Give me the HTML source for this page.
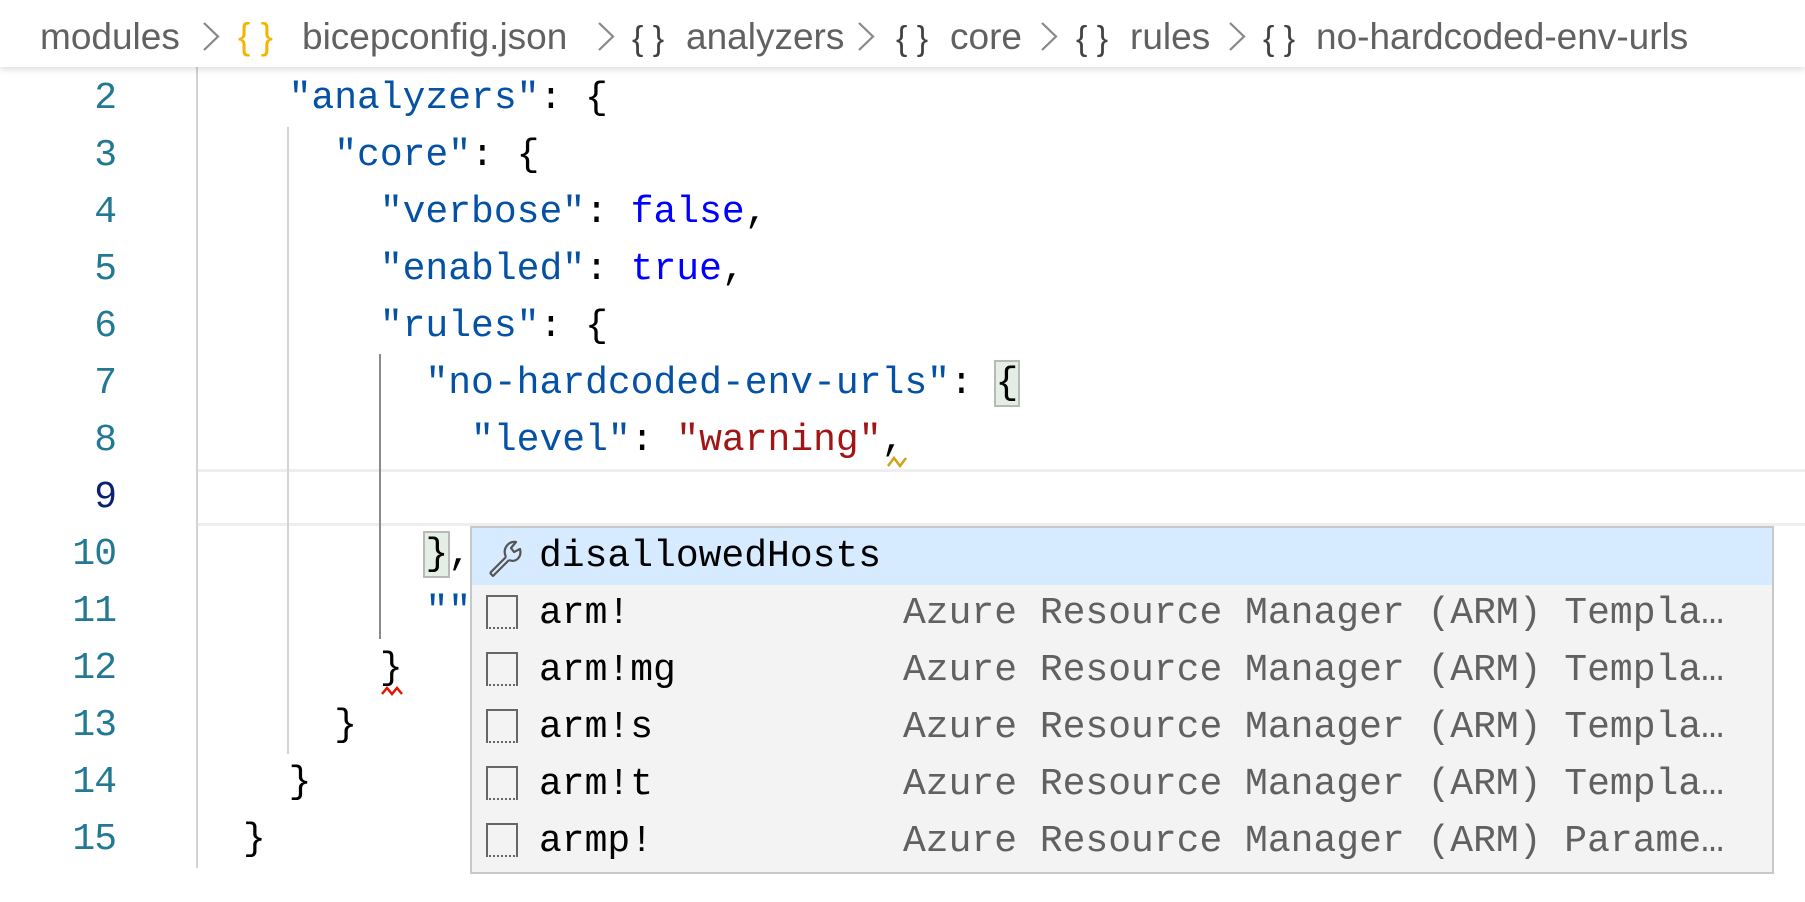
<!DOCTYPE html>
<html><head><meta charset="utf-8"><style>
html,body{margin:0;padding:0;width:1805px;height:902px;overflow:hidden;background:#fff;position:relative}
.bc{position:absolute;left:0;top:0;width:1805px;height:67px;background:#fff;box-shadow:0 3px 6px rgba(0,0,0,0.12);z-index:5;font-family:"Liberation Sans",sans-serif;font-size:37px;color:#616161;white-space:nowrap}
.bc span{position:absolute;top:17px;line-height:40px}
.bc svg{position:absolute;top:22px}
.br{color:#424242;font-size:34px}
.ln{position:absolute;left:0;width:116px;text-align:right;font-family:"Liberation Mono",monospace;font-size:38px;letter-spacing:-1px;color:#237893;height:57px;line-height:57px}
.code{position:absolute;left:243px;font-family:"Liberation Mono",monospace;font-size:38px;height:57px;line-height:57px;white-space:pre;color:#000}
.k{color:#0451a5}.b{color:#0000ff}.s{color:#a31515}
.guide{position:absolute;width:2px;background:#d3d3d3}
.sw{position:absolute;left:470px;top:526px;width:1300px;height:344px;background:#f3f3f3;border:2px solid #c8c8c8;z-index:4;font-family:"Liberation Mono",monospace;font-size:38px}
.row{position:absolute;left:0;width:1300px;height:57px;line-height:57px;white-space:pre}
.lbl{position:absolute;left:67px;top:0;color:#000}
.desc{position:absolute;left:431px;top:0;color:#616161}
.ic{position:absolute;left:14px;top:10px;width:32px;height:34px;border:2px solid #666;border-bottom:2px dotted #666;box-sizing:border-box}
</style></head><body>
<div class="bc">
<span style="left:40px">modules</span>
<svg style="left:202px" width="18" height="30"><path d="M2 1 L16 14.5 L2 28" stroke="#888" stroke-width="2.2" fill="none"/></svg>
<span style="left:238px;color:#f4b400">{ }</span>
<span style="left:302px">bicepconfig.json</span>
<svg style="left:597px" width="18" height="30"><path d="M2 1 L16 14.5 L2 28" stroke="#888" stroke-width="2.2" fill="none"/></svg>
<span class="br" style="left:632px;top:19px">{ }</span>
<span style="left:686px">analyzers</span>
<svg style="left:857px" width="18" height="30"><path d="M2 1 L16 14.5 L2 28" stroke="#888" stroke-width="2.2" fill="none"/></svg>
<span class="br" style="left:896px;top:19px">{ }</span>
<span style="left:950px">core</span>
<svg style="left:1040px" width="18" height="30"><path d="M2 1 L16 14.5 L2 28" stroke="#888" stroke-width="2.2" fill="none"/></svg>
<span class="br" style="left:1076px;top:19px">{ }</span>
<span style="left:1130px">rules</span>
<svg style="left:1228px" width="18" height="30"><path d="M2 1 L16 14.5 L2 28" stroke="#888" stroke-width="2.2" fill="none"/></svg>
<span class="br" style="left:1263px;top:19px">{ }</span>
<span style="left:1316px">no-hardcoded-env-urls</span>
</div>

<div style="position:absolute;left:197px;top:469px;width:1608px;height:57px;border-top:3px solid #eee;border-bottom:3px solid #eee;box-sizing:border-box"></div>

<div class="guide" style="left:196px;top:60px;height:808px"></div>
<div class="guide" style="left:287px;top:127px;height:627px"></div>
<div class="guide" style="left:379px;top:354px;height:285px;background:#8a8a8a"></div>

<div class="ln" style="top:70px">2</div>
<div class="ln" style="top:127px">3</div>
<div class="ln" style="top:184px">4</div>
<div class="ln" style="top:241px">5</div>
<div class="ln" style="top:298px">6</div>
<div class="ln" style="top:355px">7</div>
<div class="ln" style="top:412px">8</div>
<div class="ln" style="top:469px;color:#0b216f">9</div>
<div class="ln" style="top:526px">10</div>
<div class="ln" style="top:583px">11</div>
<div class="ln" style="top:640px">12</div>
<div class="ln" style="top:697px">13</div>
<div class="ln" style="top:754px">14</div>
<div class="ln" style="top:811px">15</div>

<div class="code" style="top:70px">  <span class="k">"analyzers"</span>: {</div>
<div class="code" style="top:127px">    <span class="k">"core"</span>: {</div>
<div class="code" style="top:184px">      <span class="k">"verbose"</span>: <span class="b">false</span>,</div>
<div class="code" style="top:241px">      <span class="k">"enabled"</span>: <span class="b">true</span>,</div>
<div class="code" style="top:298px">      <span class="k">"rules"</span>: {</div>
<div class="code" style="top:355px">        <span class="k">"no-hardcoded-env-urls"</span>: <span style="background:#e4eee4;outline:2px solid #b9b9b9">{</span></div>
<div class="code" style="top:412px">          <span class="k">"level"</span>: <span class="s">"warning"</span>,</div>
<div class="code" style="top:526px">        <span style="background:#e4eee4;outline:2px solid #b9b9b9">}</span>,</div>
<div class="code" style="top:583px">        <span class="k">""</span></div>
<div class="code" style="top:640px">      }</div>
<div class="code" style="top:697px">    }</div>
<div class="code" style="top:754px">  }</div>
<div class="code" style="top:811px">}</div>

<svg style="position:absolute;left:886px;top:454px" width="28" height="14"><path d="M2 12 L8 4 L14 12 L20 4" stroke="#d4a017" stroke-width="2.5" fill="none"/></svg>
<svg style="position:absolute;left:380px;top:684px" width="26" height="14"><path d="M2 10 L7 4 L12 10 L17 4 L22 10" stroke="#e51400" stroke-width="2.5" fill="none"/></svg>

<div class="sw">
<div class="row" style="top:0;background:#d6ebff">
<svg style="position:absolute;left:12px;top:9px" width="44" height="40" viewBox="0 0 44 40"><path d="M6 36 L22 20 M6 36 L9 39 L25 23 M22 20 C18 12 24 4 32 5 L27 11 L30 15 L36 12 C38 20 32 26 25 23" stroke="#555" stroke-width="2.2" fill="none" stroke-linejoin="round"/></svg>
<span class="lbl">disallowedHosts</span></div>
<div class="row" style="top:57px"><div class="ic"></div><span class="lbl">arm!</span><span class="desc">Azure Resource Manager (ARM) Templa…</span></div>
<div class="row" style="top:114px"><div class="ic"></div><span class="lbl">arm!mg</span><span class="desc">Azure Resource Manager (ARM) Templa…</span></div>
<div class="row" style="top:171px"><div class="ic"></div><span class="lbl">arm!s</span><span class="desc">Azure Resource Manager (ARM) Templa…</span></div>
<div class="row" style="top:228px"><div class="ic"></div><span class="lbl">arm!t</span><span class="desc">Azure Resource Manager (ARM) Templa…</span></div>
<div class="row" style="top:285px"><div class="ic"></div><span class="lbl">armp!</span><span class="desc">Azure Resource Manager (ARM) Parame…</span></div>
</div>
</body></html>
